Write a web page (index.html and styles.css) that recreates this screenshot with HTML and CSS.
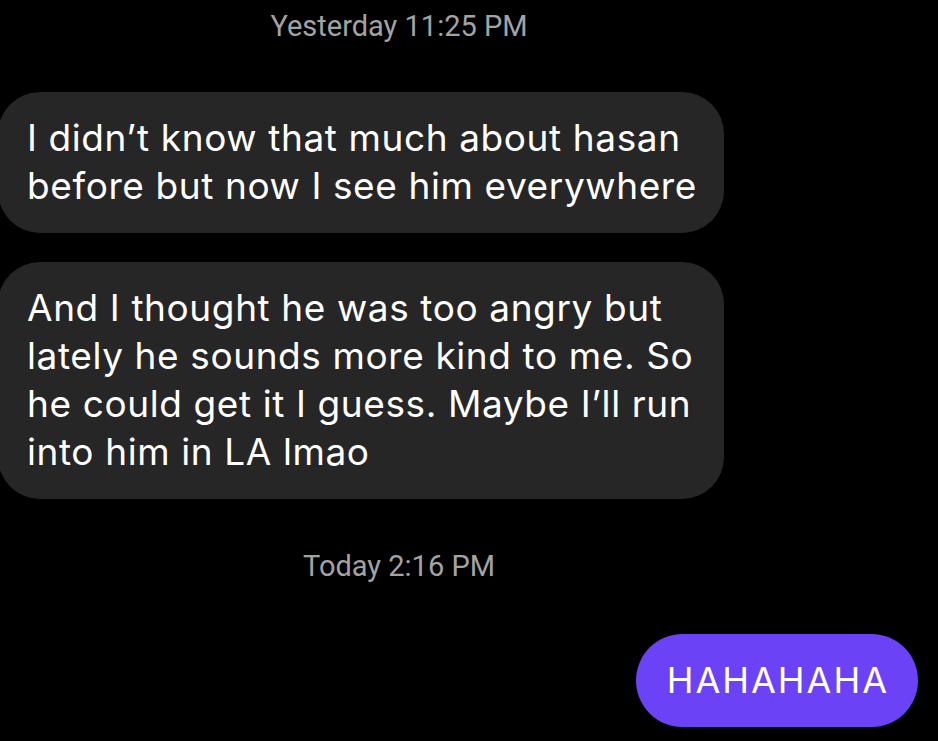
FILE: index.html
```html
<!DOCTYPE html>
<html lang="en">
	<head>
		<meta charset="UTF-8" />
		<meta name="viewport" content="width=device-width, initial-scale=1.0" />
		<title>Messages</title>
		<link rel="stylesheet" href="styles.css">
	</head>

	<body>
		<div class="thread">
			<div class="stamp">Yesterday 11:25 PM</div>

			<div class="bubble received">I didn’t know that much about hasan before but now I see him everywhere</div>
			<div class="bubble received">And I thought he was too angry but lately he sounds more kind to me. So he could get it I guess. Maybe I’ll run into him in LA lmao</div>

			<div class="stamp later">Today 2:16 PM</div>

			<div class="bubble sent">HAHAHAHA</div>
		</div>
	</body>
</html>
```

FILE: styles.css
```css
html,
body {
	margin: 0;
	background: #000;
}

body {
	width: 938px;
	height: 741px;
	overflow: hidden;
	font-family: Inter, Roboto, sans-serif;
	color: #fff;
}

.thread {
	display: flex;
	flex-direction: column;
	align-items: flex-start;
	padding-top: 8px;
}

.stamp {
	width: 798px;
	text-align: center;
	font-family: Roboto, sans-serif;
	font-size: 29px;
	line-height: 36px;
	color: #a3a3a3;
	margin-bottom: 48px;
}

.stamp.later {
	margin-top: 20px;
	margin-bottom: 50px;
}

.bubble {
	box-sizing: border-box;
	font-size: 37px;
	line-height: 48px;
	letter-spacing: 0.6px;
	border-radius: 42px;
	padding: 22px 24px 23px 29px;
}

.received {
	background: #262626;
	margin-left: -2px;
	max-width: 726px;
	margin-bottom: 29px;
}

.sent {
	align-self: flex-end;
	margin-right: 20px;
	background: #6c42f7;
	font-size: 36px;
	letter-spacing: 2px;
	border-radius: 47px;
	padding: 22px 29px 23px 31px;
}
```
